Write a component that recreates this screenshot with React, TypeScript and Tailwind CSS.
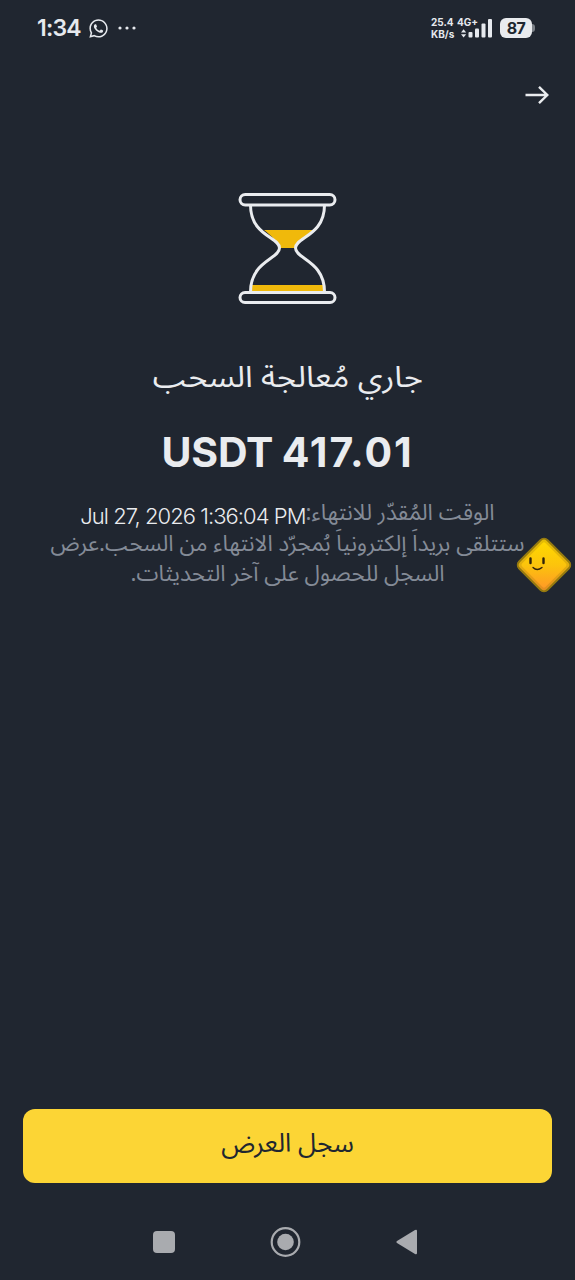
import React from "react";
import { FaWhatsapp } from "react-icons/fa";

const latin = "font-['Inter','Noto_Sans',sans-serif]";
const arabic = "font-['Noto_Sans_Arabic','DejaVu_Sans',sans-serif]";

const StatusBar: React.FC = () => (
  <header className={`h-14 pl-[37px] pr-[43px] flex items-center justify-between text-[#e6e9ee] ${latin}`}>
    <div className="flex items-center">
      <span className="w-[44px] whitespace-nowrap text-[23px] leading-none font-semibold tracking-[-0.8px]">1:34</span>
      <FaWhatsapp className="w-[21px] h-[21px] ml-[7px]" />
      <svg className="w-[18px] h-1 ml-[9px]" viewBox="0 0 18 4" fill="currentColor">
        <circle cx="2" cy="2" r="1.6" />
        <circle cx="9" cy="2" r="1.6" />
        <circle cx="16" cy="2" r="1.6" />
      </svg>
    </div>
    <div className="flex items-center">
      <div className="w-[23px] flex flex-col text-[10px] leading-[12px] font-bold whitespace-nowrap">
        <span>25.4</span>
        <span>KB/s</span>
      </div>
      <div className="relative w-[36px] h-[22px] ml-[3px]">
        <span className="absolute left-0 top-[-1px] text-[10px] leading-[12px] font-bold">4G+</span>
        <svg className="w-full h-full" viewBox="0 0 36 22" fill="currentColor">
          <path d="M4 15.5l2.6-3.3 2.6 3.3zM4 17.3l2.6 3.3 2.6-3.3z" />
          <rect x="11.5" y="15" width="4" height="5.5" rx="1" />
          <rect x="18" y="11.5" width="4" height="9" rx="1" />
          <rect x="24.5" y="6.5" width="4" height="14" rx="1" />
          <rect x="31" y="2" width="4" height="18.5" rx="1" />
        </svg>
      </div>
      <div className="relative ml-[7px] w-[32px] h-[20px] rounded-[6px] bg-[#e9ebee] text-[#20262f] text-[16px] leading-[20px] tracking-[-0.5px] font-bold text-center">
        87
        <span className="absolute -right-[3px] top-[6px] w-[3px] h-[8px] rounded-r bg-[#7b8087]" />
      </div>
    </div>
  </header>
);

const Hourglass: React.FC = () => (
  <svg className="w-[100px] h-[112px] shrink-0" viewBox="0 0 100 112" fill="none">
    <path d="M26 38H75C69 43.5 62 47 58 56H42C38 48 33 43.5 26 38Z" fill="#f0b90b" />
    <path d="M14 93H87V100H14Z" fill="#f0b90b" />
    <g stroke="#eaecef" strokeWidth="3">
      <rect x="2" y="2.5" width="95" height="10.5" rx="5.25" />
      <rect x="2" y="100.5" width="95" height="10" rx="5" />
      <path d="M12.5 13C12.5 44 41.5 45 41.5 56C41.5 67 12.5 69 12.5 100" />
      <path d="M86.5 13C86.5 44 57.5 45 57.5 56C57.5 67 86.5 69 86.5 100" />
    </g>
  </svg>
);

const Mascot: React.FC = () => (
  <svg className="absolute left-[515px] top-[536px] w-[58px] h-[58px]" viewBox="0 0 58 58">
    <defs>
      <linearGradient id="face" x1="0.1" y1="0.1" x2="0.9" y2="0.9">
        <stop offset="0" stopColor="#ffd800" />
        <stop offset="0.5" stopColor="#fcc40c" />
        <stop offset="1" stopColor="#ff9a26" />
      </linearGradient>
    </defs>
    <g transform="rotate(45 29 29)">
      <rect x="8.5" y="8.5" width="41" height="41" rx="5.5" fill="url(#face)" />
      <rect x="10.5" y="10.5" width="37" height="37" rx="4" fill="none" stroke="#a67c10" strokeOpacity="0.3" strokeWidth="4" />
      <rect x="9" y="9" width="40" height="40" rx="5" fill="none" stroke="#94790f" strokeWidth="2" />
    </g>
    <path d="M15.5 22.5v4.5M28.5 22.5v4.5" stroke="#30220b" strokeWidth="2.4" strokeLinecap="round" />
    <path d="M18 31.5Q22 35.5 27 31.5" stroke="#30220b" strokeWidth="1.3" fill="none" strokeLinecap="round" />
  </svg>
);

const App: React.FC = () => {
  return (
    <div className="relative w-[575px] h-[1280px] bg-[#202630] overflow-hidden flex flex-col">
      <StatusBar />

      <div className="h-[78px] flex items-center justify-end pr-[26px]">
        <svg className="w-[24px] h-[20px]" viewBox="0 0 24 20" fill="none" stroke="#eaecef" strokeWidth="2.4">
          <path d="M0.5 10H22M14 1.8L22.3 10L14 18.2" />
        </svg>
      </div>

      <main className="flex-1 flex flex-col items-center pt-[58px]">
        <Hourglass />
        <h1 dir="rtl" className={`mt-[52px] h-[44px] leading-[44px] whitespace-nowrap text-[29.5px] scale-x-110 text-[#eaecef] ${arabic}`}>
          جاري مُعالجة السحب
        </h1>
        <p className={`mt-[28px] h-[48px] leading-[48px] whitespace-nowrap text-[41px] font-bold text-[#eaecef] [word-spacing:-1px] ${latin}`}>
          <span className="tracking-[-0.2px]">USDT </span>
          <span className="tracking-[1.9px]">417.01</span>
        </p>
        <div dir="rtl" className={`mt-[22px] flex flex-col items-center text-[22.3px] leading-[30.5px] whitespace-nowrap text-[#848b97] ${arabic}`}>
          <p className="flex text-[22.3px]">
            <span>الوقت المُقدّر للانتهاء:</span>
            <span dir="ltr" className={`relative top-[3px] text-[22px] font-light tracking-[-0.95px] text-[#eaecef] ${latin}`}>Jul 27, 2026 1:36:04 PM</span>
          </p>
          <p>ستتلقى بريداَ إلكترونياَ بُمجرّد الانتهاء من السحب.عرض</p>
          <p>السجل للحصول على آخر التحديثات.</p>
        </div>
      </main>

      <div className="px-[23px]">
        <button dir="rtl" className={`w-full h-[74px] rounded-[12px] bg-[#fcd535] text-[#202630] text-[26px] pb-1.5 ${arabic}`}>
          سجل العرض
        </button>
      </div>

      <nav className="h-[97px] pt-[20px] flex items-center pl-[152px]">
        <svg className="w-[266px] h-[32px]" viewBox="0 0 266 32" fill="#a9abaf">
          <rect x="1" y="5" width="22" height="22" rx="4" />
          <circle cx="133.5" cy="16" r="8.3" />
          <circle cx="133.5" cy="16" r="13.8" fill="none" stroke="#a9abaf" strokeWidth="2.2" />
          <path d="M245 15L263 4Q265 3.2 265 5V27Q265 28.8 263 28L245 17Q243.5 16 245 15Z" />
        </svg>
      </nav>

      <Mascot />
    </div>
  );
};

export default App;
